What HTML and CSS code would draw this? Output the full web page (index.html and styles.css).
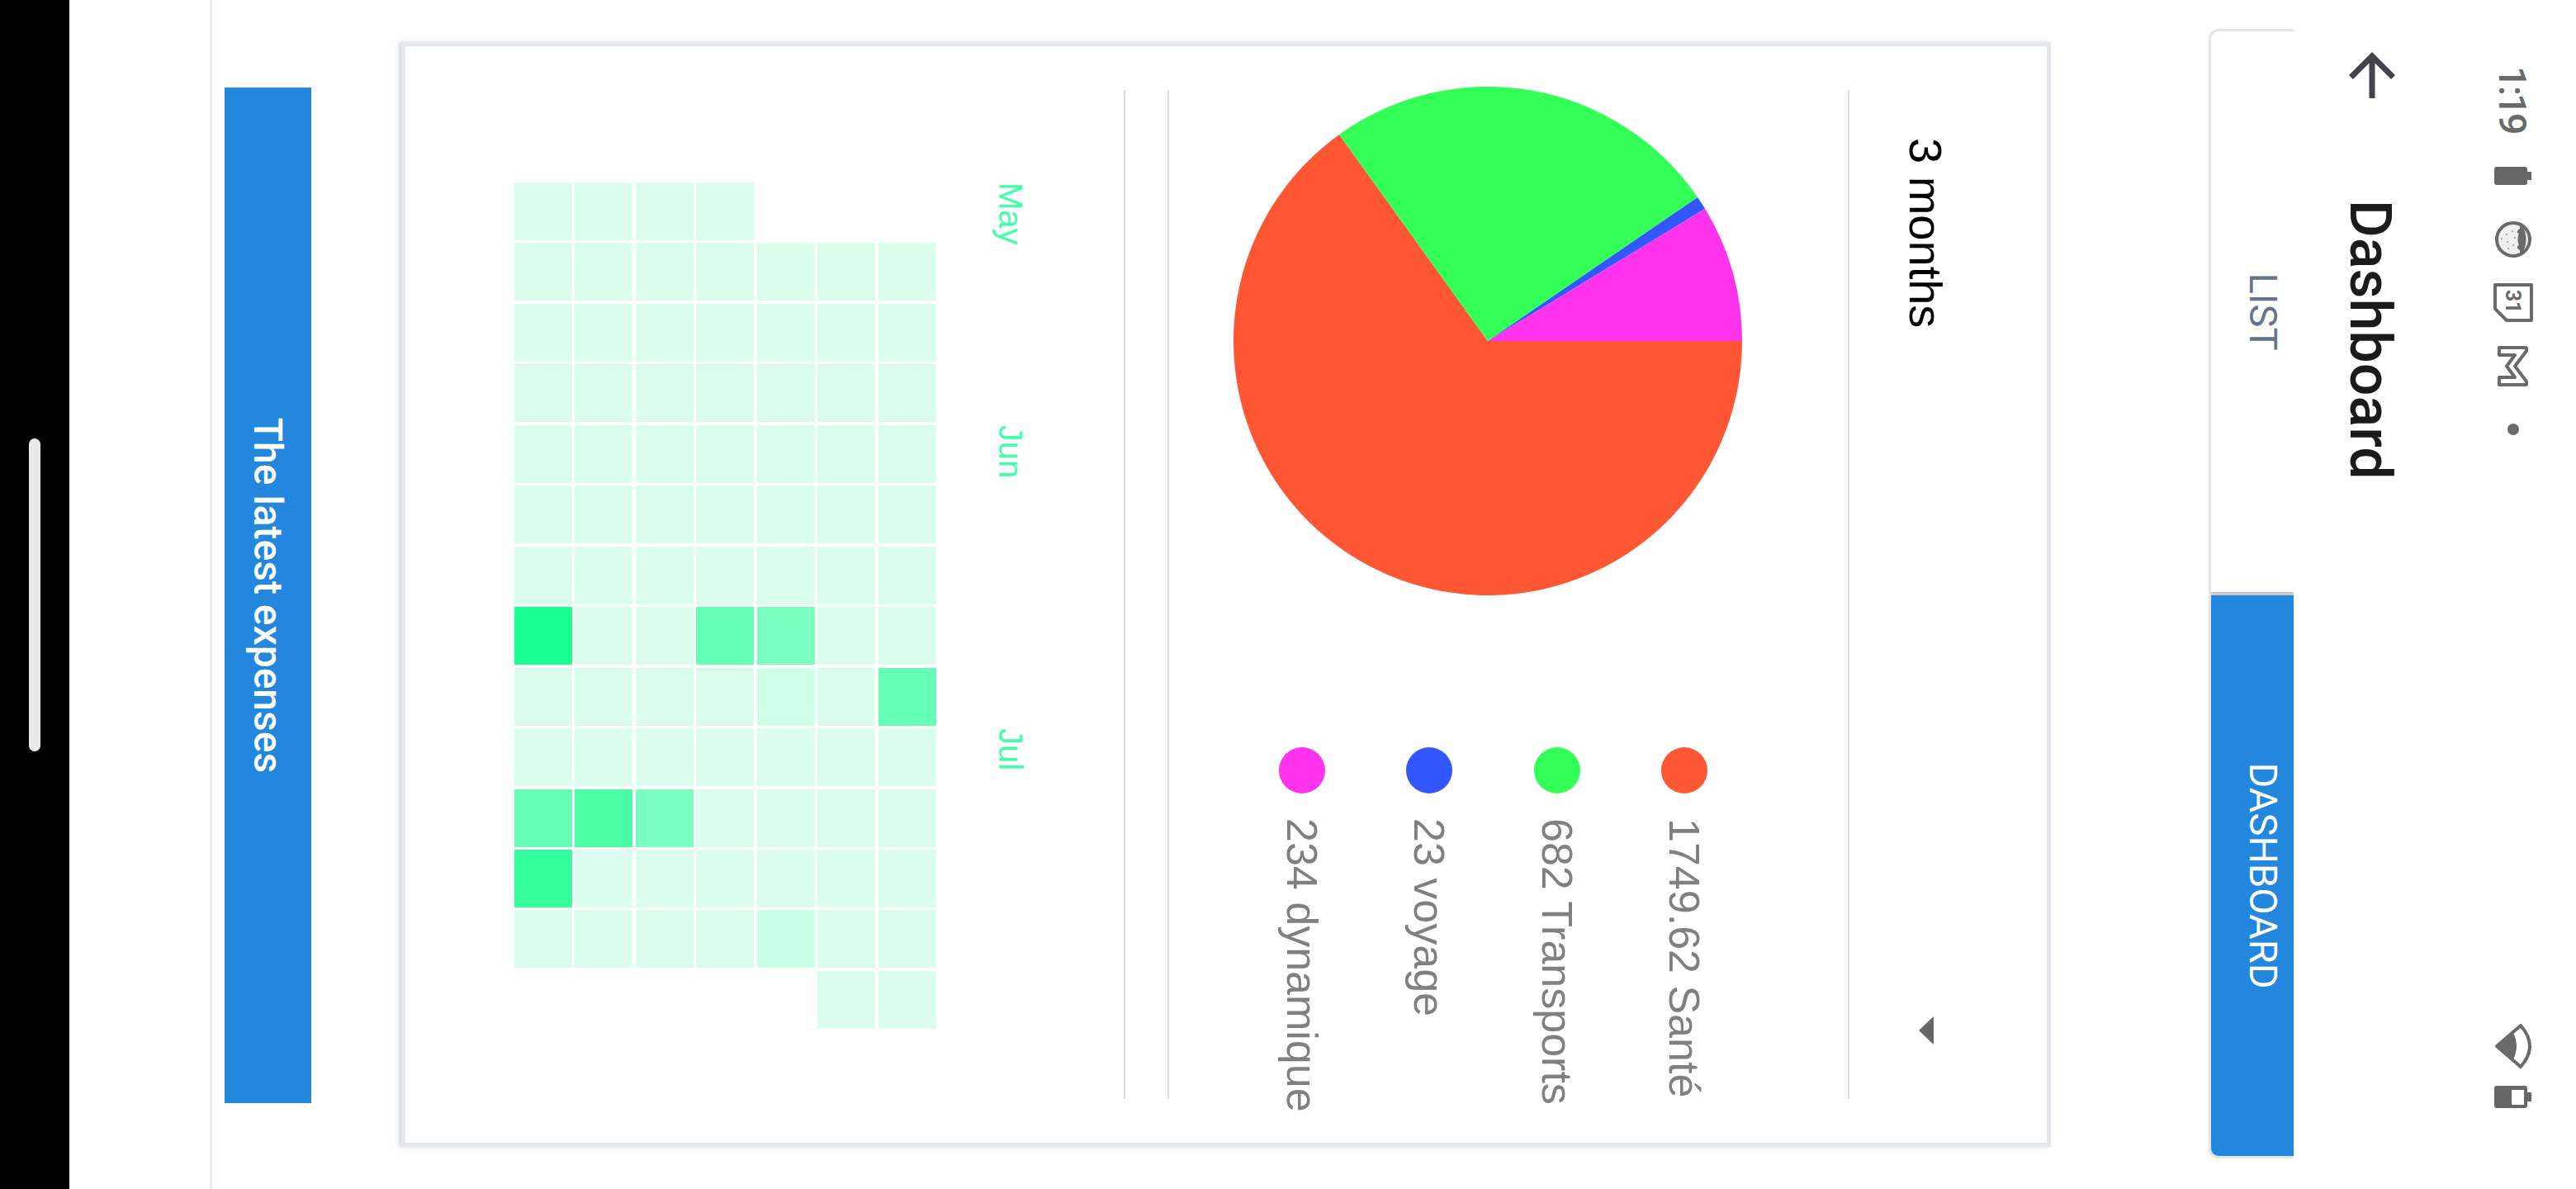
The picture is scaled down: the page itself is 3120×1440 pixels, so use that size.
FILE: index.html
```html
<!DOCTYPE html>
<html lang="en">
<head>
    <meta charset="UTF-8">
    <title>Dashboard</title>
    <link rel="stylesheet" href="styles.css">
</head>
<body>
    <!-- the phone was held sideways: the screen is built upright and turned as a whole -->
    <div class="screen">
        <header class="appbar">
            <div class="statusbar">
                <div class="status-left">
                    <span class="time">1:19</span>
                    <svg class="ic-battery" viewBox="0 0 22 45"><path d="M6 0h10v5h3a3 3 0 0 1 3 3v34a3 3 0 0 1-3 3H3a3 3 0 0 1-3-3V8a3 3 0 0 1 3-3h3z"/></svg>
                    <svg class="ic-photo" viewBox="0 0 44 44">
                        <circle cx="22" cy="22" r="20" fill="#efefef" stroke="#6a6a6a" stroke-width="4"/>
                        <path d="M4 14C9 4 35 4 40 14h-5c-2 4-5 4-6 1-3 2-11 2-14 0-1 3-4 3-6-1z" fill="#6a6a6a"/>
                        <g fill="#9a9a9a"><circle cx="12" cy="23" r="1"/><circle cx="20" cy="20" r="1"/><circle cx="29" cy="22" r="1"/><circle cx="16" cy="30" r="1"/><circle cx="25" cy="29" r="1"/><circle cx="33" cy="28" r="1"/><circle cx="21" cy="36" r="1"/></g>
                    </svg>
                    <svg class="ic-cal" viewBox="0 0 49 48">
                        <path d="M3 2h43v30L32 46H3z" fill="none" stroke="#6a6a6a" stroke-width="4" stroke-linejoin="round"/>
                        <text x="23" y="33" text-anchor="middle">31</text>
                    </svg>
                    <svg class="ic-mail" viewBox="0 0 49 37"><path d="M2 35V3q0-1 1-1h3l18.500 14L43 2h3q1 0 1 1v32h-9V16L24.500 26 11 16v19z" fill="none" stroke="#6a6a6a" stroke-width="4" stroke-linejoin="round"/></svg>
                    <span class="status-dot"></span>
                </div>
                <div class="status-right">
                    <svg class="ic-wifi" viewBox="0 0 54 46">
                        <path d="M27 43L2 14Q27-8 52 14z" fill="none" stroke="#6a6a6a" stroke-width="4" stroke-linejoin="round"/>
                        <path d="M27 44L9 24Q27 14 45 24z" fill="#6a6a6a"/>
                    </svg>
                    <svg class="ic-battery-low" viewBox="0 0 27 45"><path fill-rule="evenodd" d="M8 0h11v5h5a3 3 0 0 1 3 3v34a3 3 0 0 1-3 3H3a3 3 0 0 1-3-3V8a3 3 0 0 1 3-3h5zM5 9v15h18V9z"/></svg>
                </div>
            </div>
            <div class="toolbar">
                <svg class="ic-back" viewBox="0 0 24 24"><path d="M20 11H7.830l5.590-5.590L12 4l-8 8 8 8 1.410-1.410L7.830 13H20v-2z"/></svg>
                <h1 class="title">Dashboard</h1>
            </div>
        </header>

        <nav class="tabs">
            <a class="tab">LIST</a>
            <a class="tab tab-active">DASHBOARD</a>
        </nav>

        <main class="content">
            <section class="card">
                <div class="range">
                    <span>3 months</span>
                    <span class="range-arrow"></span>
                </div>

                <div class="chart-row">
                    <svg class="pie" viewBox="0 0 616 616">
                        <path fill="#ff5733" d="M308 308V0A308 308 0 1 1 58 487.900z"/>
                        <path fill="#33ff57" d="M308 308L58 487.900A308 308 0 0 1 133.900 53.900z"/>
                        <path fill="#3357ff" d="M308 308L133.900 53.900A308 308 0 0 1 147.800 44.900z"/>
                        <path fill="#ff33ec" d="M308 308L147.800 44.900A308 308 0 0 1 308 0z"/>
                    </svg>
                    <ul class="legend">
                        <li class="legend-item"><span class="dot dot-red"></span>1749.62 Santé</li>
                        <li class="legend-item"><span class="dot dot-green"></span>682 Transports</li>
                        <li class="legend-item"><span class="dot dot-blue"></span>23 voyage</li>
                        <li class="legend-item"><span class="dot dot-pink"></span>234 dynamique</li>
                    </ul>
                </div>

                <div class="heatmap">
                    <div class="months">
                        <span class="month-may">May</span>
                        <span class="month-jun">Jun</span>
                        <span class="month-jul">Jul</span>
                    </div>
                    <div class="days">
                        <span></span><span></span><span></span><span class="lv0"></span><span class="lv0"></span><span class="lv0"></span><span class="lv0"></span>
                        <span class="lv0"></span><span class="lv0"></span><span class="lv0"></span><span class="lv0"></span><span class="lv0"></span><span class="lv0"></span><span class="lv0"></span>
                        <span class="lv0"></span><span class="lv0"></span><span class="lv0"></span><span class="lv0"></span><span class="lv0"></span><span class="lv0"></span><span class="lv0"></span>
                        <span class="lv0"></span><span class="lv0"></span><span class="lv0"></span><span class="lv0"></span><span class="lv0"></span><span class="lv0"></span><span class="lv0"></span>
                        <span class="lv0"></span><span class="lv0"></span><span class="lv0"></span><span class="lv0"></span><span class="lv0"></span><span class="lv0"></span><span class="lv0"></span>
                        <span class="lv0"></span><span class="lv0"></span><span class="lv0"></span><span class="lv0"></span><span class="lv0"></span><span class="lv0"></span><span class="lv0"></span>
                        <span class="lv0"></span><span class="lv0"></span><span class="lv0"></span><span class="lv0"></span><span class="lv0"></span><span class="lv0"></span><span class="lv0"></span>
                        <span class="lv0"></span><span class="lv0"></span><span class="lv3"></span><span class="lv4"></span><span class="lv0"></span><span class="lv0"></span><span class="lv7"></span>
                        <span class="lv4"></span><span class="lv0"></span><span class="lv1"></span><span class="lv0"></span><span class="lv0"></span><span class="lv0"></span><span class="lv0"></span>
                        <span class="lv0"></span><span class="lv0"></span><span class="lv0"></span><span class="lv0"></span><span class="lv0"></span><span class="lv0"></span><span class="lv0"></span>
                        <span class="lv0"></span><span class="lv0"></span><span class="lv0"></span><span class="lv0"></span><span class="lv3"></span><span class="lv5"></span><span class="lv4"></span>
                        <span class="lv0"></span><span class="lv0"></span><span class="lv0"></span><span class="lv0"></span><span class="lv0"></span><span class="lv0"></span><span class="lv6"></span>
                        <span class="lv0"></span><span class="lv0"></span><span class="lv2"></span><span class="lv0"></span><span class="lv0"></span><span class="lv0"></span><span class="lv0"></span>
                        <span class="lv0"></span><span class="lv0"></span><span></span><span></span><span></span><span></span><span></span>
                    </div>
                </div>
            </section>

            <a class="latest">The latest expenses</a>
        </main>

        <footer class="bottom"></footer>
        <div class="navbar"><span class="home-pill"></span></div>
    </div>
</body>
</html>
```
FILE: styles.css
```css
html, body {
    margin: 0;
    padding: 0;
    background: #fff;
    overflow: hidden;
    width: 3120px;
    height: 1440px;
}

.screen {
    width: 1440px;
    height: 3120px;
    display: flex;
    flex-direction: column;
    font-family: Roboto, sans-serif;
    background: #fff;
    transform-origin: 0 0;
    transform: translateX(3120px) rotate(90deg);
}

/* status bar and toolbar */
.appbar {
    height: 342px;
    flex: none;
}

.statusbar {
    height: 152px;
    display: flex;
    justify-content: space-between;
    align-items: center;
    padding: 0 98px 0 80px;
}

.status-left, .status-right {
    display: flex;
    align-items: center;
}

.time {
    font-size: 47px;
    font-weight: 500;
    color: #6a6a6a;
    width: 77px;
    letter-spacing: -3px;
}

.statusbar svg {
    fill: #666;
    flex: none;
}

.ic-battery { width: 22px; height: 45px; margin-left: 45px; }
.ic-photo { width: 44px; height: 44px; margin-left: 44px; }
.ic-cal { width: 49px; height: 48px; margin-left: 30px; }
.ic-mail { width: 49px; height: 37px; margin-left: 28px; }
.ic-wifi { width: 54px; height: 46px; }
.ic-battery-low { width: 27px; height: 45px; margin-left: 21px; }

.ic-cal text {
    font-family: Roboto, sans-serif;
    font-size: 25px;
    font-weight: 700;
    fill: #6a6a6a;
}

.status-dot {
    width: 14px;
    height: 14px;
    border-radius: 50%;
    background: #6a6a6a;
    margin-left: 45px;
}

.toolbar {
    display: flex;
    align-items: center;
    padding: 50px 0 0 49px;
}

.ic-back {
    width: 84px;
    height: 84px;
    fill: #45424e;
    flex: none;
}

.title {
    margin: 5px 0 0 109px;
    font-size: 70px;
    font-weight: 500;
    line-height: 84px;
    color: #1b1b1b;
}

.tabs {
    height: 103px;
    flex: none;
    box-sizing: border-box;
    margin: 0 37px 0 35px;
    display: flex;
    border: 3px solid #e5e5e5;
    border-top: none;
    border-radius: 0 0 12px 12px;
    overflow: hidden;
}

.tab {
    flex: 1;
    display: flex;
    align-items: center;
    justify-content: center;
    padding-bottom: 28px;
    font-size: 47px;
    color: #64748b;
}

.tab-active {
    background: #2388dd;
    color: #fff;
    border-left: 4px solid #c5cbd0;
}

/* main area */
.content {
    flex: 1;
    padding-top: 191px;
    display: flex;
    flex-direction: column;
}

.card {
    height: 1998px;
    box-sizing: border-box;
    margin: 0 51px;
    padding: 0 53px;
    border: 5px solid #e3e8ec;
    background: #fff;
    box-shadow: 0 3px 5px rgba(0, 0, 0, 0.16);
    font-family: "Liberation Sans", sans-serif;
}

.range {
    height: 241px;
    box-sizing: border-box;
    padding: 53px 66px 0 58px;
    display: flex;
    justify-content: space-between;
    align-items: center;
    font-size: 56px;
    color: #000;
    border-bottom: 2px solid #dcdcdc;
}

.range-arrow {
    width: 0;
    height: 0;
    border-left: 17px solid transparent;
    border-right: 17px solid transparent;
    border-top: 18px solid #666;
}

.chart-row {
    display: flex;
    align-items: flex-start;
    padding: 128px 0 78px;
    border-bottom: 2px solid #dcdcdc;
}

.pie {
    width: 616px;
    height: 616px;
    margin-left: -4px;
    flex: none;
}

.legend {
    list-style: none;
    margin: 42px 0 0 184px;
    padding: 0;
    display: flex;
    flex-direction: column;
    gap: 98.300px;
}

.legend-item {
    display: flex;
    align-items: center;
    gap: 30px;
    height: 56px;
    font-size: 52px;
    line-height: 56px;
    color: #808080;
    white-space: nowrap;
}

.dot {
    width: 56px;
    height: 56px;
    border-radius: 50%;
    flex: none;
}

.dot-red { background: #ff5733; }
.dot-green { background: #33ff57; }
.dot-blue { background: #3357ff; }
.dot-pink { background: #ff33ec; }

.heatmap {
    margin-top: 51px;
    border-top: 2px solid #dcdcdc;
    padding: 113px 0 0 112px;
}

.months, .days {
    display: grid;
    grid-template-columns: repeat(14, 70px);
    column-gap: 3.460px;
}

.months {
    font-size: 40px;
    line-height: 48px;
    color: #40ffa8;
    white-space: nowrap;
}

.month-may { grid-column: 1; }
.month-jun { grid-column: 5; }
.month-jul { grid-column: 10; }

.days {
    margin-top: 66px;
    grid-template-rows: repeat(7, 70px);
    grid-auto-flow: column;
    row-gap: 3.500px;
}

.lv0 { background: #dbfeec; }
.lv1 { background: #d0ffe8; }
.lv2 { background: #c9ffe4; }
.lv3 { background: #7bffc0; }
.lv4 { background: #66ffb6; }
.lv5 { background: #4affa6; }
.lv6 { background: #33ff9c; }
.lv7 { background: #19ff90; }

.latest {
    width: 1230px;
    height: 105px;
    margin: 109px 0 0 106px;
    display: flex;
    align-items: center;
    justify-content: center;
    background: #2388dd;
    color: #fff;
    font-size: 48px;
    font-weight: 500;
}

.bottom {
    height: 173px;
    flex: none;
    box-sizing: border-box;
    border-top: 3px solid #ececec;
}

.navbar {
    height: 84px;
    flex: none;
    background: #000;
    display: flex;
    align-items: center;
    justify-content: center;
}

.home-pill {
    width: 379px;
    height: 14px;
    border-radius: 7px;
    background: #e9e9e9;
}
```
